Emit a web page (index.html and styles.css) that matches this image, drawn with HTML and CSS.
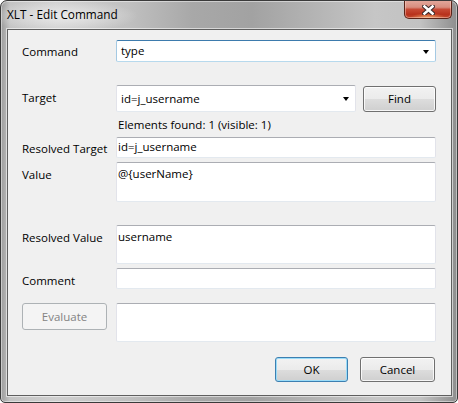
FILE: index.html
```html
<!DOCTYPE html>
<html>
<head>
<meta charset="utf-8">
<title>XLT - Edit Command</title>
<link rel="stylesheet" href="styles.css">
</head>
<body>
<div class="window">
  <div class="titlebar">
    <span class="title">XLT - Edit Command</span>
    <div class="close">
      <svg width="13" height="10" viewBox="0 0 13 10">
        <path d="M2.5 1.5 L10.5 8.5 M10.5 1.5 L2.5 8.5" stroke="#3a2a2a" stroke-width="4.6" stroke-linecap="square" fill="none"/>
        <path d="M2.5 1.5 L10.5 8.5 M10.5 1.5 L2.5 8.5" stroke="#ffffff" stroke-width="2.6" stroke-linecap="square" fill="none"/>
      </svg>
    </div>
  </div>
  <div class="client">
    <div class="row row-command">
      <div class="lbl lbl-4">Command</div>
      <div class="field combo focused"><span>type</span><span class="arrow"></span></div>
    </div>
    <div class="row row-target">
      <div class="lbl lbl-5">Target</div>
      <div class="field-group">
        <div class="field combo"><span>id=j_username</span><span class="arrow"></span></div>
        <div class="btn btn-find">Find</div>
      </div>
    </div>
    <div class="row row-info">
      <div class="lbl"></div>
      <div class="info">Elements found: 1 (visible: 1)</div>
    </div>
    <div class="row row-resolved-target">
      <div class="lbl lbl-4">Resolved Target</div>
      <div class="field text single">id=j_username</div>
    </div>
    <div class="row row-value">
      <div class="lbl lbl-5">Value</div>
      <div class="field text area">@{userName}</div>
    </div>
    <div class="row row-resolved-value">
      <div class="lbl lbl-5">Resolved Value</div>
      <div class="field text area">username</div>
    </div>
    <div class="row row-comment">
      <div class="lbl lbl-5">Comment</div>
      <div class="field text single"></div>
    </div>
    <div class="row row-evaluate">
      <div class="lbl">
        <div class="btn btn-disabled btn-evaluate">Evaluate</div>
      </div>
      <div class="field text area"></div>
    </div>
    <div class="row row-actions">
      <div class="btn btn-default btn-ok">OK</div>
      <div class="btn btn-cancel">Cancel</div>
    </div>
  </div>
</div>
</body>
</html>
```

FILE: styles.css
```css
html, body {
  margin: 0;
  padding: 0;
  background: #ffffff;
}

body {
  width: 458px;
  height: 403px;
  overflow: hidden;
  font-family: "Open Sans", "Noto Sans", sans-serif;
  font-size: 11.5px;
  color: #000;
}

.window {
  box-sizing: border-box;
  width: 458px;
  height: 403px;
  border: 1px solid #3a3a3a;
  border-radius: 7px 7px 5px 5px;
  background:
    radial-gradient(ellipse 75px 16px at 62px 15px, rgba(235,235,235,0.95), rgba(235,235,235,0) 100%),
    linear-gradient(to right, #9c9c9c 0%, #c4c4c4 2%, #cfcfcf 12%, #c0c0c0 28%, #a8a8a8 42%, #a2a2a2 55%, #b3b3b3 68%, #c6c6c6 82%, #c2c2c2 92%, #8e8e8e 100%);
  box-shadow: inset 0 0 0 1px rgba(255,255,255,0.45);
  display: flex;
  flex-direction: column;
  overflow: hidden;
}

.titlebar {
  height: 28px;
  display: flex;
  justify-content: space-between;
  align-items: flex-start;
  flex: none;
}

.title {
  font-size: 11.8px;
  line-height: 16px;
  padding-top: 5px;
  padding-left: 6px;
  color: #000;
}

.close {
  box-sizing: border-box;
  width: 48px;
  height: 19px;
  margin-right: 5px;
  margin-top: -1px;
  border: 1px solid #5a2419;
  border-top: none;
  border-radius: 0 0 5px 5px;
  background:
    radial-gradient(ellipse 18px 5px at 50% 100%, rgba(255,190,120,0.8), rgba(255,190,120,0) 100%),
    linear-gradient(#e4aa9e 0%, #d88e7f 40%, #c74a35 52%, #b8321d 80%, #c2482d 100%);
  box-shadow: inset 0 0 0 1px rgba(255,220,210,0.45);
  display: flex;
  align-items: center;
  justify-content: center;
}

.close svg {
  display: block;
  margin-top: 1px;
}

.client {
  flex: 1;
  margin: 0 5px 6px 6px;
  border: 1px solid #5f5f5f;
  background: #f0f0f0;
  box-shadow: 0 0 0 1px rgba(255,255,255,0.55);
  padding: 10px 15px 0 14px;
  display: flex;
  flex-direction: column;
}

.row {
  display: flex;
  align-items: flex-start;
}

.lbl {
  width: 94px;
  flex: none;
  line-height: 16px;
  white-space: nowrap;
}

.lbl-4 { padding-top: 4px; }
.lbl-5 { padding-top: 5px; }

.field {
  box-sizing: border-box;
  flex: 1;
  background: #fff;
  border: 1px solid;
  border-color: #abadb3 #e2e3ea #e3e9ef #e2e3ea;
  border-radius: 2px;
  line-height: 16px;
}

.combo {
  display: flex;
  align-items: center;
  justify-content: space-between;
  padding: 0 6px 0 4px;
}

.combo.focused {
  border-color: #3d7bad #a4c9e3 #b7d9ed #a4c9e3;
}

.arrow {
  width: 0;
  height: 0;
  border-top: 4px solid #000;
  border-left: 3.5px solid transparent;
  border-right: 3.5px solid transparent;
  margin-top: 1px;
}

.text {
  padding: 0 2px 0 1px;
}

.single {
  height: 21px;
  padding-top: 1px;
}

.area {
  padding-top: 3px;
}

.row-command { margin-top: 0; }
.row-command .field { height: 22px; }

.row-target { margin-top: 23px; }
.field-group {
  flex: 1;
  display: flex;
  align-items: flex-start;
}
.row-target .combo { height: 27px; }

.btn {
  box-sizing: border-box;
  border: 1px solid #707070;
  border-radius: 3px;
  background: linear-gradient(#f2f2f2 0%, #ebebeb 50%, #dddddd 50%, #cfcfcf 100%);
  box-shadow: inset 0 0 0 1px rgba(255,255,255,0.8);
  display: flex;
  align-items: center;
  justify-content: center;
  line-height: 16px;
}

.btn-find {
  width: 73px;
  height: 26px;
  margin-left: 7px;
  margin-top: 1px;
}

.row-info {
  height: 25px;
  align-items: center;
}

.info {
  padding-left: 2px;
  line-height: 16px;
  white-space: nowrap;
}

.row-resolved-target .field { height: 21px; }

.row-value { margin-top: 4px; }
.row-value .field { height: 40px; }

.row-resolved-value { margin-top: 23px; }
.row-resolved-value .field { height: 39px; }

.row-comment { margin-top: 4px; }

.row-evaluate { margin-top: 14px; }
.row-evaluate .field { height: 39px; }

.btn-disabled {
  border-color: #adb2b5;
  background: #f4f4f4;
  box-shadow: none;
  color: #838383;
}

.btn-evaluate {
  width: 85px;
  height: 27px;
}

.row-actions {
  margin-top: 15px;
  justify-content: flex-end;
  padding-right: 1px;
}

.btn-ok {
  width: 73px;
  height: 25px;
}

.btn-default {
  border-color: #3c7fb1;
  box-shadow: inset 0 0 0 1px #9bdcf8;
}

.btn-cancel {
  width: 75px;
  height: 25px;
  margin-left: 12px;
}
```
